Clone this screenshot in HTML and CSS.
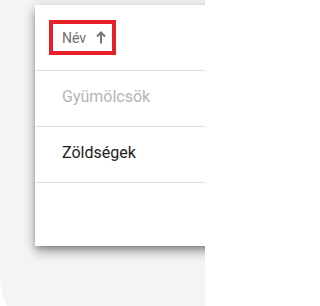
FILE: index.html
```html
<!DOCTYPE html>
<html lang="hu">
<head>
<meta charset="utf-8">
<title>Táblázat</title>
<link rel="stylesheet" href="styles.css">
</head>
<body>
<div class="panel">
  <div class="card">
    <div class="head">
      <div class="th">
        <span class="th-label">Név</span>
        <svg class="sort-icon" viewBox="0 0 10 13" aria-hidden="true"><path d="M5 12.5V1.5M1 5.5L5 1.5L9 5.5"/></svg>
      </div>
    </div>
    <div class="row row-disabled">Gyümölcsök</div>
    <div class="row">Zöldségek</div>
    <span class="highlight"></span>
  </div>
</div>
</body>
</html>
```

FILE: styles.css
```css
html, body {
  margin: 0;
  padding: 0;
  background: #ffffff;
  overflow: hidden;
  font-family: Roboto, "Liberation Sans", sans-serif;
}

.panel {
  width: 205px;
  height: 347px;
  box-sizing: border-box;
  padding: 5px 0 0 35px;
  background: #f4f4f4;
  border-bottom-left-radius: 72px;
  overflow: hidden;
}

.card {
  position: relative;
  width: 200px;
  height: 241px;
  background: #ffffff;
  box-shadow: 0 6px 10px rgba(0, 0, 0, 0.28), 0 1px 14px rgba(0, 0, 0, 0.12), 0 3px 5px -1px rgba(0, 0, 0, 0.2);
}

.head {
  height: 66px;
  box-sizing: border-box;
  border-bottom: 1px solid #e0e0e0;
  display: flex;
  align-items: center;
  padding-left: 27px;
}

.th {
  display: flex;
  align-items: center;
  font-size: 14px;
  color: #6f6f6f;
}

.sort-icon {
  width: 10px;
  height: 13px;
  margin-left: 10px;
  fill: none;
  stroke: #757575;
  stroke-width: 2;
}

.highlight {
  position: absolute;
  left: 14px;
  top: 15px;
  width: 67px;
  height: 35px;
  box-sizing: border-box;
  border: 4px solid #e8202a;
}

.row {
  height: 56px;
  box-sizing: border-box;
  border-bottom: 1px solid #e0e0e0;
  display: flex;
  align-items: center;
  padding: 0 0 5px 27px;
  font-size: 16px;
  color: #212121;
}

.row-disabled {
  color: #b5b5b5;
}
```
